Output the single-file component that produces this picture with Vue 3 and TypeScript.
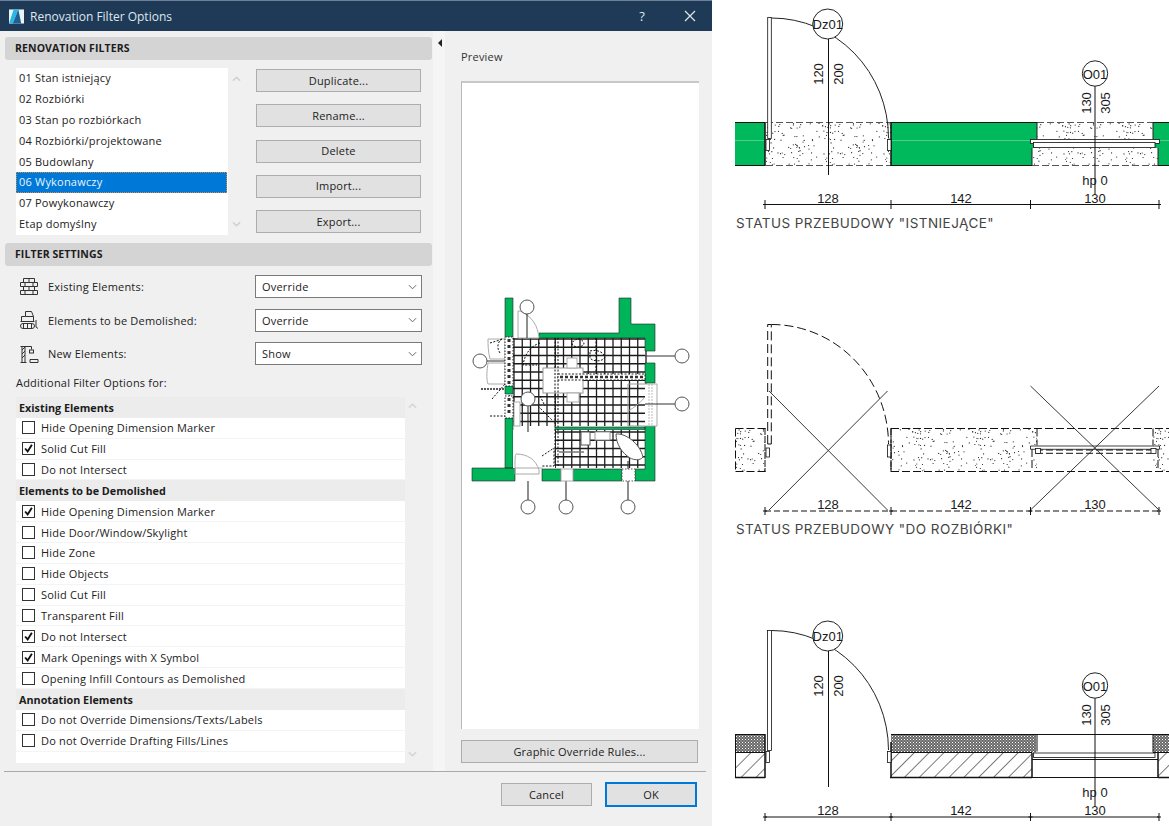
<script setup lang="ts">
const filters = ['01 Stan istniejący','02 Rozbiórki','03 Stan po rozbiórkach','04 Rozbiórki/projektowane','05 Budowlany','06 Wykonawczy','07 Powykonawczy','Etap domyślny']
const actions = ['Duplicate...','Rename...','Delete','Import...','Export...']
const settings = [
  { label: 'Existing Elements:', value: 'Override', icon: 'brick' },
  { label: 'Elements to be Demolished:', value: 'Override', icon: 'dozer' },
  { label: 'New Elements:', value: 'Show', icon: 'crane' }
]
const options = [
  { t: 'Existing Elements', h: true },
  { t: 'Hide Opening Dimension Marker' },
  { t: 'Solid Cut Fill', c: true },
  { t: 'Do not Intersect' },
  { t: 'Elements to be Demolished', h: true },
  { t: 'Hide Opening Dimension Marker', c: true },
  { t: 'Hide Door/Window/Skylight' },
  { t: 'Hide Zone' },
  { t: 'Hide Objects' },
  { t: 'Solid Cut Fill' },
  { t: 'Transparent Fill' },
  { t: 'Do not Intersect', c: true },
  { t: 'Mark Openings with X Symbol', c: true },
  { t: 'Opening Infill Contours as Demolished' },
  { t: 'Annotation Elements', h: true },
  { t: 'Do not Override Dimensions/Texts/Labels' },
  { t: 'Do not Override Drafting Fills/Lines' }
]
let seed = 17
const rnd = () => { seed = (seed * 16807) % 2147483647; return seed / 2147483647 }
const dots = Array.from({ length: 90 }, () => ({ x: +(rnd() * 60).toFixed(1), y: +(rnd() * 44).toFixed(1) }))
const dims = [{ x: 828, t: '128' }, { x: 961, t: '142' }, { x: 1095, t: '130' }]
const ticks = [765, 891, 1030.5, 1159]
const gridV = Array.from({ length: 17 }, (_, i) => 514 + i * 8.25)
const gridH = Array.from({ length: 11 }, (_, i) => 338 + i * 8.25)
const gridH2 = Array.from({ length: 5 }, (_, i) => 431 + i * 8.25)
const tags = [[527,306],[480,360],[682,355],[682,403],[528,398],[528,506],[566,506],[628,506]]
</script>

<template>
  <div class="page">
    <section class="dialog">
      <header class="title">
        <svg class="logo" viewBox="0 0 16 15"><rect width="16" height="15" fill="#e8f4f8"/><path d="M0 15 5 0h5L4 15z" fill="#29b6e8"/><path d="M4 15 10 0l3 15z" fill="#1f5f92"/></svg>
        <span class="title-text">Renovation Filter Options</span>
        <span class="help">?</span>
        <svg class="close" viewBox="0 0 12 12"><path d="M1 1l10 10M11 1 1 11" stroke="#dfe7ee" stroke-width="1.2" fill="none"/></svg>
      </header>
      <div class="body">
        <div class="left">
          <div class="band first">RENOVATION FILTERS</div>
          <div class="filter-row">
            <ul class="list">
              <li v-for="(f, i) in filters" :key="f" :class="{ sel: i === 5 }">{{ f }}</li>
            </ul>
            <div class="scroll">
              <svg viewBox="0 0 10 6"><path d="M1 5l4-4 4 4" stroke="#cfcfcf" stroke-width="1.6" fill="none"/></svg>
              <svg viewBox="0 0 10 6"><path d="M1 1l4 4 4-4" stroke="#cfcfcf" stroke-width="1.6" fill="none"/></svg>
            </div>
            <div class="actions">
              <button v-for="a in actions" :key="a" class="btn">{{ a }}</button>
            </div>
          </div>
          <div class="band second">FILTER SETTINGS</div>
          <div class="settings">
            <div v-for="s in settings" :key="s.label" class="setting">
              <svg class="ico" viewBox="0 0 20 20" fill="none" stroke="#333" stroke-width="1">
                <template v-if="s.icon === 'brick'">
                  <path d="M4.500 1.500h11v4h-11zM1.500 5.500h17v4h-17zM4.500 9.500h11v4h-11zM1.500 13.500h17v4h-17zM10 1.500v4M6 5.500v4M14 5.500v4M10 9.500v4M6 13.500v4M14 13.500v4"/>
                </template>
                <template v-else-if="s.icon === 'dozer'">
                  <path d="M6.500 1.500h6l2 5v5h-12v-5h4zM6.500 6.500h8M1.500 11.500h14"/>
                  <rect x="1.500" y="13.500" width="14" height="5" rx="2.500"/>
                  <path d="M4.500 13.500v5M8.500 13.500v5M12.500 13.500v5M17 10v7l2 1.500"/>
                </template>
                <template v-else>
                  <path d="M1.500 2.500h11M3 2.500v16M6 2.500v16M1.500 18.500h6M3 6l3-3M3 10l3-3M3 14l3-3M12.500 2.500v3"/>
                  <rect x="10.500" y="6" width="4" height="3"/>
                  <path d="M11 15.500h8v3h-8z"/>
                </template>
              </svg>
              <span class="setting-label">{{ s.label }}</span>
              <div class="select">
                <span>{{ s.value }}</span>
                <svg viewBox="0 0 10 6"><path d="M1 1l4 4 4-4" stroke="#666" stroke-width="1.100" fill="none"/></svg>
              </div>
            </div>
          </div>
          <div class="additional">Additional Filter Options for:</div>
          <div class="options-wrap">
            <div class="options">
              <div v-for="(o, i) in options" :key="i" class="opt" :class="{ head: o.h }">
                <template v-if="o.h">{{ o.t }}</template>
                <template v-else>
                  <span class="box">
                    <svg v-if="o.c" viewBox="0 0 13 13"><path d="M2.500 6.500l3 3.500 5-8" stroke="#111" stroke-width="2.200" fill="none"/></svg>
                  </span>
                  <span>{{ o.t }}</span>
                </template>
              </div>
            </div>
            <div class="scroll tall">
              <svg viewBox="0 0 10 6"><path d="M1 5l4-4 4 4" stroke="#d4d4d4" stroke-width="1.600" fill="none"/></svg>
              <svg viewBox="0 0 10 6"><path d="M1 1l4 4 4-4" stroke="#d4d4d4" stroke-width="1.600" fill="none"/></svg>
            </div>
          </div>
        </div>
        <div class="splitter"><span class="tri"></span></div>
        <div class="right">
          <div class="preview-label">Preview</div>
          <div class="preview">
            <svg class="plan" viewBox="470 296 222 218" width="222" height="218">
              <g stroke="#1c1c1c" stroke-width="1.300" fill="none">
                <line v-for="x in gridV" :key="x" :x1="x" :x2="x" y1="337" y2="425"/>
                <line v-for="y in gridH" :key="y" x1="513" x2="645" :y1="y" :y2="y"/>
                <line v-for="x in gridV.slice(5)" :key="'b' + x" :x1="x" :x2="x" y1="429" y2="467"/>
                <line v-for="y in gridH2" :key="'c' + y" x1="555" x2="645" :y1="y" :y2="y"/>
              </g>
              <path fill="#00b45a" stroke="#222" stroke-width=".6" d="M505 297h8v40h-8zM539 332h80v-35h12v26h24v27h-10v-13H539zM645 362h10v20h-10zM505 385h8v8h-8zM505 417h8v50h-8zM472 467h43v13h-43zM542 468h19v12h-19zM573 468h49v12h-49zM635 468h10v-43h10v55h-20zM555 426h90v2.500h-90z"/>
              <rect x="543" y="367" width="40" height="25" fill="#fff" stroke="#999"/>
              <rect x="567" y="357" width="10" height="10" fill="#fff" stroke="#aaa"/>
              <rect x="567" y="392" width="12" height="9" fill="#fff" stroke="#aaa"/>
              <rect x="513" y="429" width="42" height="38" fill="#fff"/>
              <rect x="514" y="401" width="6" height="24" fill="#fff" stroke="#aaa"/>
              <path d="M645 383h12v42h-12" fill="#fff" stroke="#aaa"/>
              <path d="M649 383v42M652 383v42" stroke="#bbb" stroke-dasharray="2 1"/>
              <path d="M628 383h17M628 383v42h17" fill="none" stroke="#999"/>
              <rect x="581" y="431" width="9" height="13" fill="#fff" stroke="#555"/>
              <rect x="595" y="431" width="15" height="8" fill="#fff" stroke="#999"/>
              <path d="M616 433c10-1 24 10 27 23-3 4-9 3-13 1-8-5-14-14-14-24z" fill="#fff" stroke="#555"/>
              <g fill="none" stroke="#aaa">
                <path d="M518 337v-27h2c12 5 18 15 19 27z" fill="#fff"/>
                <path d="M515 467c0-7 0-13 1-14 12 0 20 6 23 16v4h-24z"/>
                <path d="M488 338h17v20h-15c-2-8-2-14-2-20zM488 362h17v21h-17c-2-6-1-14 0-21z"/>
                <path d="M628 410c6-3 12-8 16-13"/>
                <path d="M515 467h28"/>
              </g>
              <g fill="none" stroke="#111" stroke-dasharray="2 1.500">
                <path d="M555 337v128M558 337v128M596 337v36M490 342l13-4M500 352c-4-6-2-12 3-15M492 398l13-15M490 415h15M510 408c-4-5-4-9 0-14M540 342c-9 3-15 10-17 22h14M540 395l5 10M578 338c4 0 6 3 6 5-2 4-10 4-12 0 0-2 3-5 6-5zM590 350c8-2 14 2 15 6-2 5-12 5-15 1zM542 455l12-8v18h-13M538 405l14 14"/>
              </g>
              <path d="M558 373h87v6h-87z" fill="#fff" stroke="#222" stroke-dasharray="2 1.500"/>
              <path d="M560 376h84" stroke="#333" stroke-width="2.500" stroke-dasharray="3 2"/>
              <path d="M559 451h25" stroke="#777" stroke-width="1.500"/>
              <g stroke="#333" stroke-width="1.100" fill="none">
                <path d="M527 313v24M487 360h20M645 355h30M645 403h30M528 405v26M528 480v19M566 480v19M628 460v39"/>
              </g>
              <rect x="505" y="336" width="8" height="49" fill="#fff" stroke="#222" stroke-dasharray="1.500 1.500"/>
              <path d="M509 338v45" stroke="#333" stroke-width="3" stroke-dasharray="3 3"/>
              <rect x="505" y="395" width="8" height="22" fill="#fff" stroke="#222" stroke-dasharray="1.500 1.500"/>
              <path d="M509 397v18" stroke="#333" stroke-width="3" stroke-dasharray="3 3"/>
              <path d="M481 388h24" stroke="#222" stroke-dasharray="2 1" stroke-width="1.500"/>
              <rect x="622" y="468" width="13" height="12" fill="#fff" stroke="#555" stroke-dasharray="1.500 1.500"/>
              <rect x="561" y="468" width="12" height="12" fill="#fff" stroke="#aaa"/>
              <circle v-for="t in tags" :key="t[0] + '-' + t[1]" :cx="t[0]" :cy="t[1]" r="7" fill="#fff" stroke="#555"/>
            </svg>
          </div>
          <button class="btn wide">Graphic Override Rules...</button>
        </div>
      </div>
      <footer class="foot">
        <button class="btn foot-btn">Cancel</button>
        <button class="btn foot-btn ok">OK</button>
        <span class="grip"></span>
      </footer>
    </section>

    <section class="sheets">
      <div class="sheet">
        <svg class="draw" viewBox="712 0 457 214" width="457" height="214">
          <defs>
            <pattern id="dotA" width="60" height="44" patternUnits="userSpaceOnUse" x="766" y="122">
              <circle v-for="(d, i) in dots" :key="i" :cx="d.x" :cy="d.y" r=".6" fill="#222"/>
            </pattern>
          </defs>
          <g fill="#00b95c">
            <rect x="735" y="122.500" width="30" height="43"/>
            <rect x="891" y="122.500" width="146" height="43"/>
            <rect x="1153" y="122.500" width="16" height="43"/>
          </g>
          <path d="M735 140.500h30M891 140.500h146M1153 140.500h16" stroke="#6fd89e" stroke-width=".7"/>
          <rect x="766" y="122.500" width="125" height="43" fill="url(#dotA)"/>
          <rect x="1037" y="122.500" width="116" height="17" fill="url(#dotA)"/>
          <rect x="1032" y="148" width="126" height="17.500" fill="#fff"/>
          <rect x="1032" y="148" width="126" height="17.500" fill="url(#dotA)"/>
          <path d="M735 122.500h30M891 122.500h146M1153 122.500h16M735 165.500h30M891 165.500h141M1158 165.500h11" stroke="#111" fill="none"/>
          <path d="M766 122.500h125M766 165.500h125M1037 122.500h116M1032 165.500h126" stroke="#555" stroke-dasharray="7 3" fill="none"/>
          <path d="M765 122v44M891 122v44" stroke="#111" stroke-width="1.500"/>
          <path d="M1037 122.500v17M1153 122.500v17M1032 148v17.500M1158 148v17.500" stroke="#222"/>
          <rect x="767.700" y="17.500" width="3.600" height="121" fill="#fff" stroke="#111" stroke-width=".8"/>
          <path d="M771.500 18A117 120 0 0 1 888.500 138" fill="none" stroke="#222"/>
          <rect x="766" y="139.500" width="3.500" height="11" fill="#fff" stroke="#111" stroke-width=".8"/>
          <rect x="887.500" y="139.500" width="3.500" height="11" fill="#fff" stroke="#111" stroke-width=".8"/>
          <rect x="1030.500" y="139.500" width="129" height="4" fill="#fff" stroke="#111" stroke-width=".8"/>
          <rect x="1033.500" y="142.500" width="121.500" height="5" fill="#fff" stroke="#111" stroke-width=".8"/>
          <path d="M828.500 39v136M1095 86v108" stroke="#111"/>
          <circle cx="827.700" cy="24" r="15" fill="#fff" stroke="#222"/>
          <circle cx="1095" cy="73.500" r="12.700" fill="#fff" stroke="#222"/>
          <g class="cad">
            <text x="827.700" y="29" text-anchor="middle">Dz01</text>
            <text x="1095" y="78.500" text-anchor="middle">O01</text>
            <text transform="translate(823 74) rotate(-90)" text-anchor="middle">120</text>
            <text transform="translate(843 74) rotate(-90)" text-anchor="middle">200</text>
            <text transform="translate(1091 103) rotate(-90)" text-anchor="middle">130</text>
            <text transform="translate(1110 103) rotate(-90)" text-anchor="middle">305</text>
            <text x="1095" y="185" text-anchor="middle">hp 0</text>
            <text v-for="d in dims" :key="d.t" :x="d.x" y="203" text-anchor="middle">{{ d.t }}</text>
          </g>
          <path d="M765 204.500h394" stroke="#111"/>
          <path v-for="x in ticks" :key="x" :d="`M${x} 200v9M${x - 2} 204.500h4`" stroke="#111"/>
        </svg>
        <div class="cap">STATUS PRZEBUDOWY "ISTNIEJĄCE"</div>
      </div>

      <div class="sheet">
        <svg class="draw" viewBox="712 0 457 214" width="457" height="214">
          <defs>
            <pattern id="dotB" width="60" height="44" patternUnits="userSpaceOnUse" x="736" y="122">
              <circle v-for="(d, i) in dots" :key="i" :cx="d.x" :cy="d.y" r=".6" fill="#222"/>
            </pattern>
          </defs>
          <rect x="736" y="122.500" width="29" height="43" fill="url(#dotB)"/>
          <rect x="891" y="122.500" width="146" height="43" fill="url(#dotB)"/>
          <rect x="1153" y="122.500" width="16" height="43" fill="url(#dotB)"/>
          <path d="M735.500 122.500h30M735.500 165.500h30M735.500 122.500v43M891 122.500h278M891 165.500h278M891 122.500v43M1037 122.500v17M1153 122.500v17M1032 143v22M1158 143v22" fill="none" stroke="#111" stroke-dasharray="8 3"/>
          <path d="M767.700 138V18.500h3.600V138M771.500 18.500A117 120 0 0 1 888.500 138" fill="none" stroke="#111" stroke-dasharray="9 4"/>
          <path d="M767.700 138h3.600" fill="none" stroke="#111"/>
          <rect x="766" y="142" width="3.500" height="9" fill="#fff" stroke="#111" stroke-width=".8"/>
          <rect x="887.500" y="139" width="3.500" height="12" fill="#fff" stroke="#111" stroke-width=".8"/>
          <path d="M765 122v44M891 122v44" stroke="#111" stroke-dasharray="7 1"/>
          <path d="M1030.500 140h129v3.300h-129z" fill="#fff" stroke="#111" stroke-width=".8"/>
          <path d="M1036 144h115M1036 147.300h115" stroke="#111" stroke-dasharray="7 3"/>
          <rect x="1035.500" y="142.500" width="5" height="5" fill="#fff" stroke="#111" stroke-width=".8"/>
          <rect x="1151" y="142.500" width="5" height="5" fill="#fff" stroke="#111" stroke-width=".8"/>
          <path d="M769 85 887.500 204M769 204 887.500 85M1030.500 80 1159 204M1030.500 204 1159 80" stroke="#222" stroke-width=".9"/>
          <g class="cad">
            <text v-for="d in dims" :key="d.t" :x="d.x" y="203" text-anchor="middle">{{ d.t }}</text>
          </g>
          <path d="M765 205h394" stroke="#111" stroke-dasharray="6 3"/>
          <path v-for="x in ticks" :key="x" :d="`M${x} 201v8M${x - 2} 205h4`" stroke="#111"/>
        </svg>
        <div class="cap">STATUS PRZEBUDOWY "DO ROZBIÓRKI"</div>
      </div>

      <div class="sheet">
        <svg class="draw" viewBox="712 0 457 214" width="457" height="214">
          <defs>
            <pattern id="honey" width="3" height="3" patternUnits="userSpaceOnUse">
              <rect width="3" height="3" fill="#fff"/>
              <circle cx="1.500" cy="1.500" r="1.200" fill="none" stroke="#111" stroke-width=".9"/>
            </pattern>
            <pattern id="diag" width="10.500" height="10.500" patternUnits="userSpaceOnUse" patternTransform="rotate(45)">
              <line x1="0" y1="0" x2="0" y2="10.500" stroke="#222" stroke-width="1.200"/>
            </pattern>
          </defs>
          <rect x="735" y="122.500" width="30" height="18" fill="url(#honey)"/>
          <rect x="891" y="122.500" width="145" height="18" fill="url(#honey)"/>
          <rect x="1153" y="122.500" width="16" height="18" fill="url(#honey)"/>
          <rect x="735" y="140.500" width="30" height="24.500" fill="url(#diag)"/>
          <rect x="891" y="140.500" width="141" height="24.500" fill="url(#diag)"/>
          <rect x="1158" y="140.500" width="11" height="24.500" fill="url(#diag)"/>
          <path d="M735 122.500h30M891 122.500h278M735 140.500h30M891 140.500h141M1153 140.500h16M1037 122.500v17M1153 122.500v18M735.500 122.500v43" stroke="#111" fill="none"/>
          <path d="M735 165.500h30M765 122v44M890 165.500h142M1158 165.500h11M891 130v36M1032 141v25M1158 141v25" stroke="#111" stroke-width="1.500" fill="none"/>
          <path d="M1032 165.500h126M1032 147.500h126" stroke="#111" fill="none"/>
          <rect x="767.500" y="18.500" width="4" height="120" fill="#fff" stroke="#111" stroke-width=".8"/>
          <path d="M771.500 18.500A117 120 0 0 1 888.500 138" fill="none" stroke="#222"/>
          <rect x="766" y="139.500" width="3.500" height="11" fill="#fff" stroke="#111" stroke-width=".8"/>
          <rect x="887.500" y="139.500" width="3.500" height="11" fill="#fff" stroke="#111" stroke-width=".8"/>
          <rect x="1033.500" y="141" width="121.500" height="4.500" fill="#fff" stroke="#111" stroke-width=".8"/>
          <path d="M828.500 39v136M1095 86v108" stroke="#111"/>
          <circle cx="827.700" cy="24" r="15" fill="#fff" stroke="#222"/>
          <circle cx="1095" cy="73.500" r="12.700" fill="#fff" stroke="#222"/>
          <g class="cad">
            <text x="827.700" y="29" text-anchor="middle">Dz01</text>
            <text x="1095" y="78.500" text-anchor="middle">O01</text>
            <text transform="translate(823 74) rotate(-90)" text-anchor="middle">120</text>
            <text transform="translate(843 74) rotate(-90)" text-anchor="middle">200</text>
            <text transform="translate(1091 103) rotate(-90)" text-anchor="middle">130</text>
            <text transform="translate(1110 103) rotate(-90)" text-anchor="middle">305</text>
            <text x="1095" y="185" text-anchor="middle">hp 0</text>
            <text v-for="d in dims" :key="d.t" :x="d.x" y="203" text-anchor="middle">{{ d.t }}</text>
          </g>
          <path d="M765 205h394" stroke="#111"/>
          <path v-for="x in ticks" :key="x" :d="`M${x} 201v8M${x - 2} 205h4`" stroke="#111"/>
        </svg>
      </div>
    </section>
  </div>
</template>

<style scoped>
.page { display: flex; width: 1169px; height: 826px; overflow: hidden; background: #fff; font-family: "Open Sans", "Noto Sans", sans-serif; font-size: 11px; letter-spacing: .2px; color: #222; }
.dialog { width: 712px; height: 826px; flex: none; background: #f0f0f0; display: flex; flex-direction: column; }
.title { height: 31px; flex: none; box-sizing: border-box; background: #1e3a57; border-top: 1px solid #6c8096; display: flex; align-items: center; padding: 0 16px 0 9px; color: #dfe7ee; }
.logo { width: 15px; height: 15px; margin-right: 6px; }
.title-text { font-size: 12px; letter-spacing: 0; flex: 1; }
.help { font-size: 13px; margin-right: 39px; }
.close { width: 12px; height: 12px; }
.body { flex: 1; display: flex; min-height: 0; }
.left { width: 433px; flex: none; box-sizing: border-box; padding-left: 5px; }
.band { width: 427px; height: 23px; box-sizing: border-box; background: #d4d4d4; border-radius: 3px; font-weight: 700; font-size: 10.500px; letter-spacing: .1px; line-height: 23px; padding-left: 10px; color: #1c1c1c; }
.first { margin-top: 6px; }
.second { margin-top: 8px; }
.filter-row { display: flex; height: 167px; margin-top: 8px; padding-left: 11px; }
.list { list-style: none; margin: 0; padding: 0; width: 212px; height: 167px; background: #fff; }
.list li { height: 20.900px; line-height: 20.900px; box-sizing: border-box; padding-left: 3px; white-space: nowrap; }
.list .sel { background: #0078d7; color: #e8f4ff; width: 211px; outline: 1px dotted #d98a3a; outline-offset: -1px; }
.scroll { width: 28px; flex: none; display: flex; flex-direction: column; justify-content: space-between; align-items: flex-start; padding: 8px 0 8px 4px; box-sizing: border-box; }
.scroll svg { width: 9px; height: 6px; display: block; }
.actions { width: 165px; display: flex; flex-direction: column; justify-content: space-between; padding: 1px 0 2px; box-sizing: border-box; }
.btn { font: inherit; letter-spacing: .2px; color: #222; height: 23px; background: #e1e1e1; border: 1px solid #adadad; padding: 0 0 1px; }
.settings { display: flex; flex-direction: column; gap: 10.500px; margin-top: 9px; }
.setting { display: flex; align-items: center; height: 23px; padding-left: 14px; }
.ico { width: 20px; height: 20px; flex: none; }
.setting-label { width: 207px; margin-left: 9px; }
.select { width: 167px; height: 23px; box-sizing: border-box; background: #fff; border: 1px solid #7a7a7a; display: flex; align-items: center; justify-content: space-between; padding: 0 4px 0 6px; }
.select svg { width: 9px; height: 6px; }
.additional { height: 16px; line-height: 16px; margin: 10px 0 6px 11px; }
.options-wrap { display: flex; margin-left: 11px; }
.options { width: 389px; height: 366px; background: #fff; }
.opt { height: 20.860px; box-sizing: border-box; display: flex; align-items: center; border-bottom: 1px solid #f4f4f4; padding-left: 6px; gap: 6px; white-space: nowrap; }
.opt.head { background: #ececec; font-weight: 700; font-size: 10.800px; letter-spacing: 0; padding-left: 3px; color: #1c1c1c; border-bottom: 0; }
.box { width: 13px; height: 13px; box-sizing: border-box; background: #fff; border: 1px solid #333; display: block; flex: none; }
.box svg { width: 11px; height: 11px; display: block; }
.tall { width: 16px; height: 366px; padding: 6px 0 6px 3px; }
.splitter { width: 12px; flex: none; background: #f5f5f5; position: relative; }
.tri { position: absolute; left: 5px; top: 8px; width: 0; height: 0; border: 4px solid transparent; border-right: 4px solid #222; border-left: 0; }
.right { flex: 1; padding-left: 16px; }
.preview-label { margin-top: 18px; height: 16px; line-height: 16px; color: #333; }
.preview { margin-top: 16px; width: 238px; height: 648px; box-sizing: border-box; background: #fff; border-top: 2px solid #c8c8c8; border-left: 1px solid #b8b8b8; display: flex; align-items: center; justify-content: center; }
.plan { display: block; }
.wide { width: 237px; margin-top: 11px; display: block; }
.foot { flex: none; height: 55px; margin-left: 4px; width: 702px; box-sizing: border-box; border-top: 1px solid #a9a9a9; display: flex; align-items: flex-start; position: relative; padding-left: 497px; padding-top: 10px; }
.foot-btn { width: 91px; height: 23px; margin-top: 1px; }
.ok { width: 92px; height: 25px; margin-top: 0; margin-left: 13px; border: 2px solid #0078d7; }
.grip { position: absolute; right: -5px; bottom: 1px; width: 5px; height: 5px; background: radial-gradient(#aaa 35%, transparent 40%) 0 0 / 2px 2px; }
.sheets { flex: 1; display: flex; flex-direction: column; }
.sheet { height: 306px; flex: none; }
.draw { display: block; }
.cad text { font-family: "Liberation Sans", sans-serif; font-size: 13px; letter-spacing: 0; fill: #1a1a1a; }
.cap { height: 18px; line-height: 18px; margin-left: 24px; font-family: "Inter", sans-serif; font-size: 13.500px; letter-spacing: .45px; color: #444; white-space: nowrap; }
</style>
